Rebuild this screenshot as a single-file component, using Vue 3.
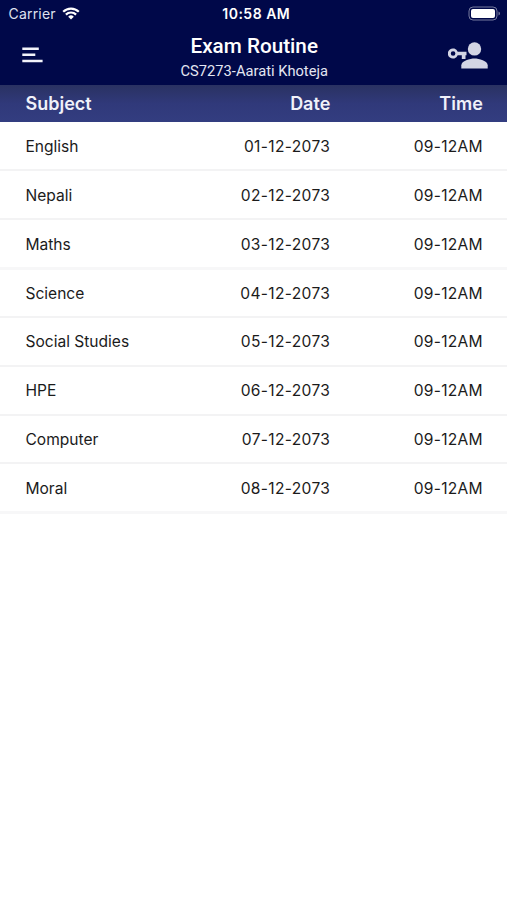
<template>
  <div class="screen">
    <header class="app-header">
      <div class="status-bar">
        <div class="carrier">
          <span>Carrier</span>
          <svg class="wifi" viewBox="0 0 18 13" width="18" height="13">
            <path d="M1.2 4.8a11 11 0 0 1 15.6 0" />
            <path d="M3.9 7.6a7.2 7.2 0 0 1 10.2 0" />
            <path class="dot" d="M9 12.4L6.2 9.7a4 4 0 0 1 5.6 0z" />
          </svg>
        </div>
        <span class="clock">10:58 AM</span>
        <svg class="battery" viewBox="0 0 33 15" width="33" height="15">
          <rect class="shell" x="1" y="1" width="28" height="13" rx="4" />
          <rect class="charge" x="3" y="3" width="24" height="9" rx="2" />
          <path class="cap" d="M30.5 5.5q1.5 .6 1.5 2t-1.5 2z" />
        </svg>
      </div>
      <div class="nav-bar">
        <button class="icon-btn" aria-label="Menu">
          <svg viewBox="0 0 22 16" width="22" height="16">
            <path class="menu-line" d="M1.3 1.7h16.5M1.3 7.8h13M1.3 14h20.3" />
          </svg>
        </button>
        <div class="titles">
          <h1>{{ title }}</h1>
          <p>{{ student }}</p>
        </div>
        <button class="icon-btn account" aria-label="Account">
          <svg viewBox="0 0 40 27" width="40" height="27">
            <circle cx="26.5" cy="6.9" r="6.7" />
            <path d="M13.3 26.5v-3.3c0-4.4 8.8-6.7 13.2-6.7s13.2 2.3 13.2 6.7v3.3z" />
            <path fill-rule="evenodd" d="M9.7 9.7h8.8v3.6h-1v3.6h-3.7v-3.6H9.7a5.1 5.1 0 1 1 0-3.6zM5.1 9.2a2.3 2.3 0 1 0 0 4.6 2.3 2.3 0 0 0 0-4.6z" />
          </svg>
        </button>
      </div>
    </header>

    <div class="row table-head">
      <span>Subject</span>
      <span class="right">Date</span>
      <span class="right">Time</span>
    </div>
    <div class="row exam" v-for="exam in exams" :key="exam.subject" :class="{ wide: exam.wide }">
      <span>{{ exam.subject }}</span>
      <span class="right date">{{ exam.date }}</span>
      <span class="right time">{{ exam.time }}</span>
    </div>
  </div>
</template>

<script setup>
import { ref } from 'vue';

const title = ref('Exam Routine');
const student = ref('CS7273-Aarati Khoteja');

const exams = ref([
  { subject: 'English', date: '01-12-2073', time: '09-12AM' },
  { subject: 'Nepali', date: '02-12-2073', time: '09-12AM' },
  { subject: 'Maths', date: '03-12-2073', time: '09-12AM', wide: true },
  { subject: 'Science', date: '04-12-2073', time: '09-12AM' },
  { subject: 'Social Studies', date: '05-12-2073', time: '09-12AM' },
  { subject: 'HPE', date: '06-12-2073', time: '09-12AM' },
  { subject: 'Computer', date: '07-12-2073', time: '09-12AM' },
  { subject: 'Moral', date: '08-12-2073', time: '09-12AM', wide: true },
]);
</script>

<style>
body {
  background: #fff;
}
</style>

<style scoped>
.screen {
  min-height: 100vh;
  font-family: Inter, "Liberation Sans", sans-serif;
  color: #1b1b1b;
}

.app-header {
  height: 85px;
  background: #000849;
  color: #fff;
}

.status-bar {
  display: grid;
  grid-template-columns: 1fr auto 1fr;
  align-items: center;
  height: 27px;
  padding: 0 6px 0 8.5px;
}

.carrier {
  display: flex;
  align-items: center;
  gap: 6px;
  font-size: 14px;
  letter-spacing: 0.2px;
  color: #dfe1ee;
}

.wifi {
  fill: none;
  stroke: #fff;
  stroke-width: 2.2;
}

.wifi .dot {
  fill: #fff;
  stroke: none;
}

.clock {
  padding-left: 3px;
  font-size: 14px;
  font-weight: 600;
  letter-spacing: 0.5px;
}

.battery {
  justify-self: end;
}

.shell {
  fill: none;
  stroke: #767a9f;
}

.charge {
  fill: #fff;
}

.cap {
  fill: #767a9f;
}

.nav-bar {
  display: grid;
  grid-template-columns: 1fr auto 1fr;
  align-items: center;
  height: 56px;
  padding: 0 19.5px 0 21px;
}

.icon-btn {
  display: flex;
  width: fit-content;
  padding: 0;
  border: none;
  background: none;
}

.menu-line {
  stroke: #f2f3fa;
  stroke-width: 2.5;
}

.account {
  justify-self: end;
  fill: #d3d5e4;
}

.titles {
  font-family: Roboto, sans-serif;
  text-align: center;
}

h1 {
  margin: 5px 0 0;
  font-size: 20.7px;
  font-weight: 500;
  line-height: 26px;
}

p {
  margin: 0;
  font-size: 14.7px;
  line-height: 24px;
  color: #e4e6f2;
}

.row {
  display: grid;
  grid-template-columns: 152.8px 152px 1fr;
  align-items: center;
  padding: 0 24.2px 0 25.5px;
}

.right {
  text-align: right;
}

.table-head {
  height: 37px;
  background: linear-gradient(#2a3262, #30397a 50%, #333d80);
  color: #f0f1f9;
  font-size: 18px;
  font-weight: 600;
}

.exam {
  box-sizing: border-box;
  height: 48.93px;
  padding-top: 1.6px;
  border-bottom: 2px solid #f3f3f4;
  font-size: 15.55px;
}

.exam.wide {
  border-color: #f7f7f8;
  box-shadow: 0 1px 0 #f7f7f8;
}

.date {
  letter-spacing: 0.35px;
}

.time {
  letter-spacing: 0.27px;
}
</style>
